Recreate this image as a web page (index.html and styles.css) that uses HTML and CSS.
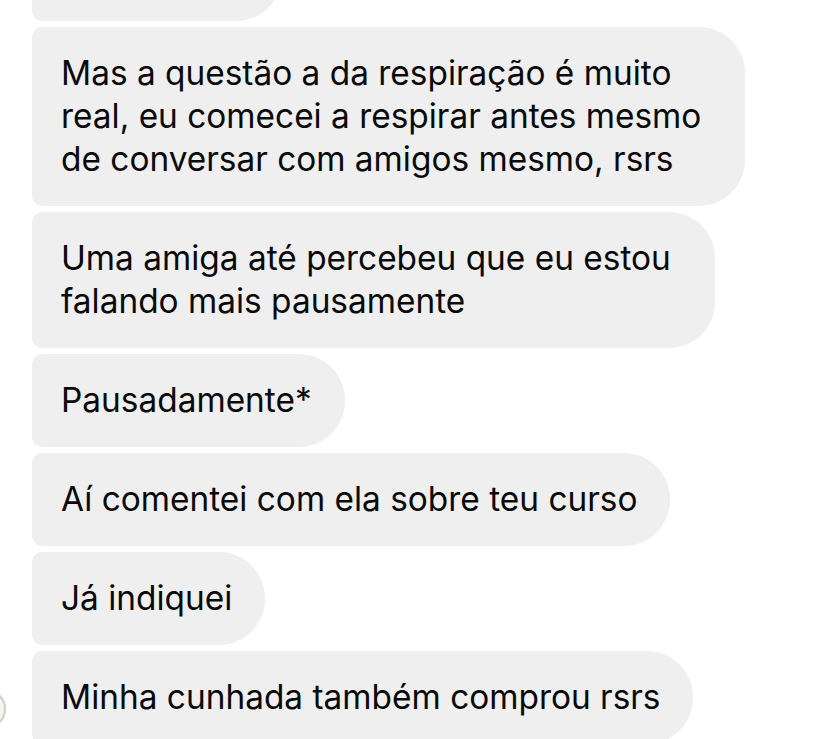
FILE: index.html
```html
<!DOCTYPE html>
<html lang="pt">
<head>
<meta charset="utf-8">
<link rel="stylesheet" href="styles.css">
</head>
<body>
<div class="thread">
  <div class="bubble bubble-cut"></div>
  <div class="bubble bubble-wide">Mas a questão a da respiração é muito<br>real, eu comecei a respirar antes mesmo<br>de conversar com amigos mesmo, rsrs</div>
  <div class="bubble bubble-wide">Uma amiga até percebeu que eu estou<br>falando mais pausamente</div>
  <div class="bubble">Pausadamente*</div>
  <div class="bubble">Aí comentei com ela sobre teu curso</div>
  <div class="bubble">Já indiquei</div>
  <div class="row-last">
    <div class="avatar"></div>
    <div class="bubble">Minha cunhada também comprou rsrs</div>
  </div>
</div>
</body>
</html>
```

FILE: styles.css
```css
html, body {
  margin: 0;
  padding: 0;
  background: #ffffff;
  overflow: hidden;
}

.thread {
  display: flex;
  flex-direction: column;
  align-items: flex-start;
  gap: 6px;
  padding-left: 32px;
  width: 818px;
  height: 739px;
  box-sizing: border-box;
  overflow: hidden;
  font-family: "Inter", "Liberation Sans", sans-serif;
  font-size: 33.4px;
  line-height: 43px;
  color: #0a0a0a;
}

.thread > * {
  flex-shrink: 0;
}

.bubble {
  background: #efefef;
  border-radius: 10px 46px 46px 10px;
  padding: 25px 33px 25px 29px;
  white-space: nowrap;
}

.bubble-cut {
  width: 250px;
  height: 43px;
  padding-left: 0;
  padding-right: 0;
  margin-top: -72px;
  box-sizing: content-box;
}

.bubble-wide {
  padding-right: 44px;
}

.row-last {
  position: relative;
}

.avatar {
  position: absolute;
  left: -66px;
  top: 38px;
  width: 36px;
  height: 36px;
  border-radius: 50%;
  border: 2px solid #cfcfc0;
  background: #f4f4f0;
}
```
